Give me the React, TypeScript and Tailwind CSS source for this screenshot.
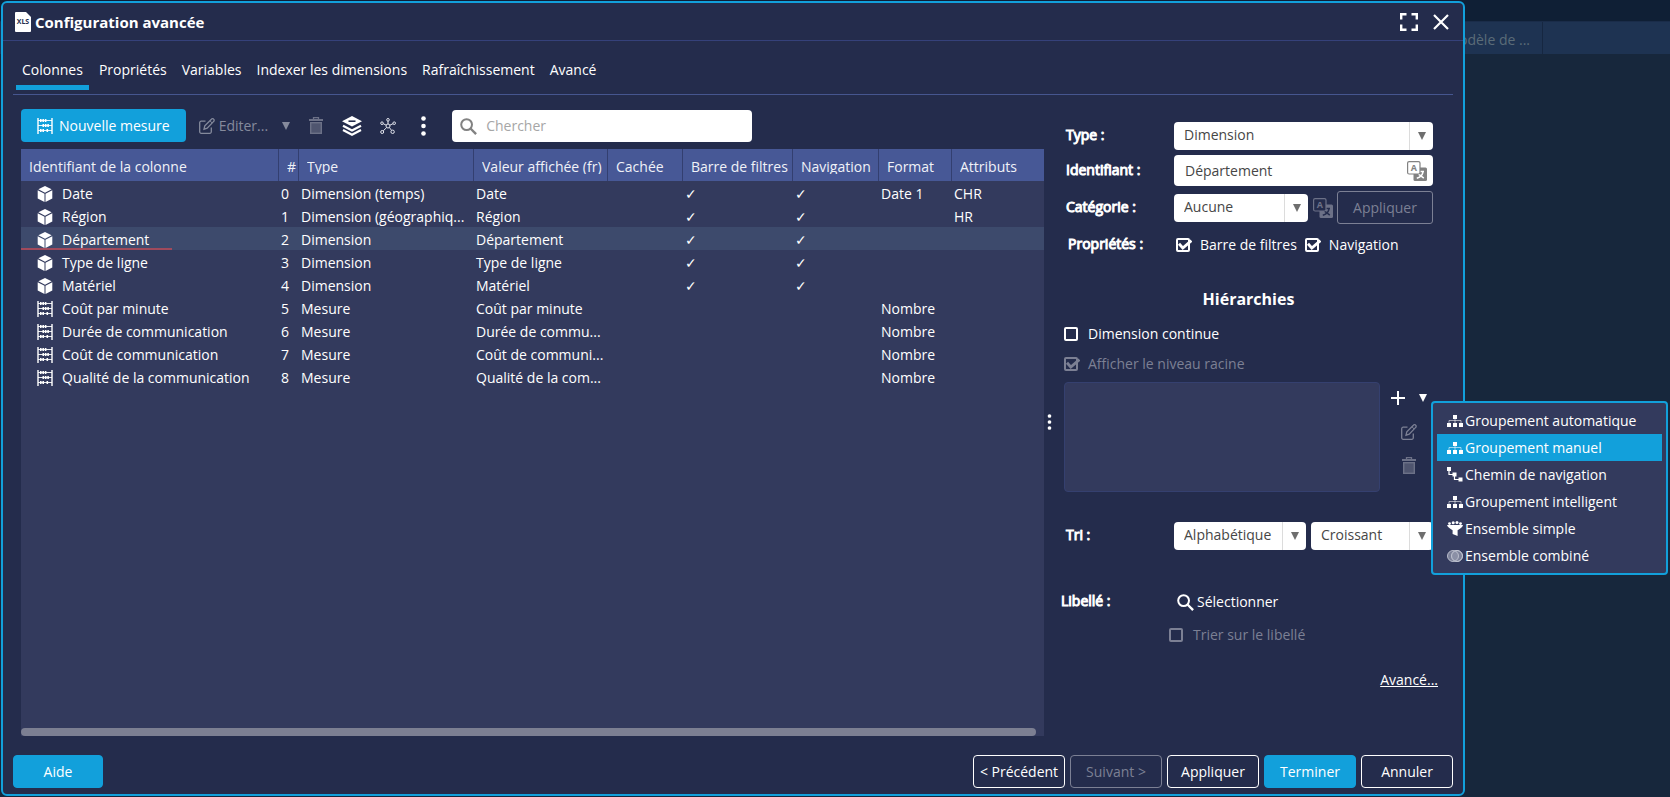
import { useState, type ReactNode } from 'react'

type Column = {
  name: string
  kind: 'dimension' | 'measure'
  type: string
  label: string
  filterBar?: boolean
  navigation?: boolean
  format?: string
  attributes?: string
}

const columns: Column[] = [
  { name: 'Date', kind: 'dimension', type: 'Dimension (temps)', label: 'Date', filterBar: true, navigation: true, format: 'Date 1', attributes: 'CHR' },
  { name: 'Région', kind: 'dimension', type: 'Dimension (géographiq...', label: 'Région', filterBar: true, navigation: true, attributes: 'HR' },
  { name: 'Département', kind: 'dimension', type: 'Dimension', label: 'Département', filterBar: true, navigation: true },
  { name: 'Type de ligne', kind: 'dimension', type: 'Dimension', label: 'Type de ligne', filterBar: true, navigation: true },
  { name: 'Matériel', kind: 'dimension', type: 'Dimension', label: 'Matériel', filterBar: true, navigation: true },
  { name: 'Coût par minute', kind: 'measure', type: 'Mesure', label: 'Coût par minute', format: 'Nombre' },
  { name: 'Durée de communication', kind: 'measure', type: 'Mesure', label: 'Durée de commu...', format: 'Nombre' },
  { name: 'Coût de communication', kind: 'measure', type: 'Mesure', label: 'Coût de communi...', format: 'Nombre' },
  { name: 'Qualité de la communication', kind: 'measure', type: 'Mesure', label: 'Qualité de la com...', format: 'Nombre' },
]

const tabs = ['Colonnes', 'Propriétés', 'Variables', 'Indexer les dimensions', 'Rafraîchissement', 'Avancé']

const headers = ['Identifiant de la colonne', '#', 'Type', 'Valeur affichée (fr)', 'Cachée', 'Barre de filtres', 'Navigation', 'Format', 'Attributs']

/* ---------- icons ---------- */

function XlsIcon() {
  return (
    <svg width="16" height="20" viewBox="0 0 16 20" aria-hidden="true">
      <path d="M1 0h10l5 5v14a1 1 0 0 1-1 1H1a1 1 0 0 1-1-1V1a1 1 0 0 1 1-1z" fill="#fff" />
      <text x="8" y="12" textAnchor="middle" fontSize="7" fontWeight="700" fontFamily="Open Sans, sans-serif" fill="#242c4c">XLS</text>
    </svg>
  )
}

function AbacusIcon() {
  return (
    <svg width="16" height="16" viewBox="0 0 16 16" fill="none" stroke="currentColor" aria-hidden="true">
      <path d="M1 0v16M15 0v16" strokeWidth="1.4" />
      <path d="M1 2.5h14M1 7.5h14M1 12.5h14" strokeWidth="0.9" />
      <path d="M3 2.5h1.6M5.4 2.5H7M7.8 2.5h1.6M5.5 7.5h1.6M7.9 7.5h1.6M10.3 7.5h1.6M3 12.5h1.6M5.4 12.5H7M9.5 12.5h1.6" strokeWidth="3" />
    </svg>
  )
}

function CubeIcon() {
  return (
    <svg width="16" height="16" viewBox="0 0 16 16" fill="currentColor" aria-hidden="true">
      <path d="M8 0l6.6 3.3L8 6.7 1.4 3.3z" />
      <path d="M.7 4.3l6.8 3.4V16L.7 12.4z" />
      <path d="M15.3 4.3L8.5 7.7V16l6.8-3.6z" />
    </svg>
  )
}

function EditIcon() {
  return (
    <svg width="16" height="16" viewBox="0 0 16 16" fill="none" stroke="currentColor" strokeWidth="1.3" aria-hidden="true">
      <path d="M6.5 3.2H2.2A1.5 1.5 0 0 0 .7 4.7v9.1a1.5 1.5 0 0 0 1.5 1.5h8.6a1.5 1.5 0 0 0 1.5-1.5V9.6" />
      <path d="M5 11.2l.8-3.4 6.6-6.6a1.5 1.5 0 0 1 2.3 0 1.5 1.5 0 0 1 0 2.2L8.2 10.2z" />
      <path d="M11 2.8l2.2 2.2" strokeWidth="1" />
    </svg>
  )
}

function TrashIcon() {
  return (
    <svg width="14" height="17" viewBox="0 0 14 17" fill="none" stroke="currentColor" aria-hidden="true">
      <path d="M0 3h14" strokeWidth="2" />
      <path d="M4.5 2V.7h5V2" strokeWidth="1.3" />
      <rect x="1.7" y="5.7" width="10.6" height="10.6" fill="currentColor" fillOpacity="0.6" strokeWidth="1.4" />
    </svg>
  )
}

function LayersIcon() {
  return (
    <svg width="20" height="20" viewBox="0 0 20 20" aria-hidden="true">
      <path d="M10 0l10 5.2-10 5.2L0 5.2z" fill="#fff" />
      <path d="M6.5 5.2h7" stroke="#242c4c" strokeWidth="1.6" />
      <path d="M1 9.8l9 4.7 9-4.7M1 14l9 4.7 9-4.7" fill="none" stroke="#fff" strokeWidth="2.2" />
    </svg>
  )
}

function NetworkIcon() {
  return (
    <svg width="16" height="16" viewBox="0 0 16 16" fill="none" stroke="#e4e6ee" strokeWidth="1" aria-hidden="true">
      <circle cx="8" cy="8" r="2" />
      <circle cx="8" cy="1.8" r="1.3" />
      <circle cx="2" cy="5.2" r="1.3" />
      <circle cx="14.2" cy="5.2" r="1.3" />
      <circle cx="2.2" cy="14" r="1.5" />
      <circle cx="12.6" cy="13.8" r="1.7" />
      <path d="M8 6V3M6.2 7.2l-3-1.5M9.8 7.2l3.2-1.5M6.6 9.6l-3.4 3.3M9.4 9.6l2.2 2.8" />
    </svg>
  )
}

function SearchIcon() {
  return (
    <svg width="17" height="17" viewBox="0 0 17 17" fill="none" stroke="currentColor" aria-hidden="true">
      <circle cx="6.6" cy="6.6" r="5.4" strokeWidth="2" />
      <path d="M10.5 10.5l5.6 5.6" strokeWidth="2.4" />
    </svg>
  )
}

function DotsIcon({ className }: { className: string }) {
  return (
    <svg className={className} viewBox="0 0 5 20" fill="#fff" aria-hidden="true">
      <circle cx="2.5" cy="2.5" r="2.3" />
      <circle cx="2.5" cy="10" r="2.3" />
      <circle cx="2.5" cy="17.5" r="2.3" />
    </svg>
  )
}

function CaretIcon() {
  return (
    <svg width="8" height="8" viewBox="0 0 8 8" fill="currentColor" aria-hidden="true">
      <path d="M0 0h8L4 8z" />
    </svg>
  )
}

function TranslateIcon() {
  return (
    <svg width="20" height="20" viewBox="0 0 20 20" aria-hidden="true">
      <rect x="6.5" y="6.5" width="13.5" height="13.5" rx="1.5" fill="currentColor" />
      <path d="M10 10.5h7M16 11.2c-.8 3-3.4 5.2-6.2 6M11.5 13.2l5.3 4" fill="none" strokeWidth="1.5" className="stroke-(--paper)" />
      <rect x="0.6" y="0.6" width="12.4" height="12.4" rx="1.5" stroke="currentColor" strokeWidth="1.2" className="fill-(--paper)" />
      <text x="6.8" y="10" textAnchor="middle" fontSize="9" fontWeight="700" fontFamily="Open Sans, sans-serif" fill="currentColor">A</text>
    </svg>
  )
}

function TreeIcon() {
  return (
    <svg width="16" height="12" viewBox="0 0 16 12" fill="#fff" aria-hidden="true">
      <rect x="6" y="0" width="4" height="4" />
      <path d="M2 8V5.5h12V8M8 4v4" fill="none" stroke="#fff" strokeOpacity="0.7" strokeWidth="0.8" />
      <rect x="0" y="8" width="4" height="4" />
      <rect x="6" y="8" width="4" height="4" />
      <rect x="12" y="8" width="4" height="4" />
    </svg>
  )
}

function PathIcon() {
  return (
    <svg width="16" height="15" viewBox="0 0 16 15" fill="#fff" aria-hidden="true">
      <rect x="0" y="0" width="4" height="4" />
      <rect x="5.5" y="5.5" width="4" height="4" />
      <rect x="11.5" y="10.5" width="4" height="4" />
      <path d="M2 4v3.500H6M7.500 9v3.500H12" fill="none" stroke="#fff" strokeWidth="1.2" />
    </svg>
  )
}

function FunnelIcon() {
  return (
    <svg width="16" height="15" viewBox="0 0 16 15" fill="#fff" aria-hidden="true">
      <path d="M0 4h16c-.3 2-2.600 3.400-5.400 5.300V15L5.600 13V9.300C3 7.600.5 6 0 4z" />
      <circle cx="2.500" cy="2.600" r="1.400" />
      <circle cx="6.200" cy="1.700" r="1.500" />
      <circle cx="10" cy="1.600" r="1.500" />
      <circle cx="13.500" cy="2.600" r="1.400" />
    </svg>
  )
}

function VennIcon() {
  return (
    <svg width="16" height="12" viewBox="0 0 16 12" fill="#8f94a9" fillOpacity="0.8" stroke="#c2c5d2" strokeWidth="0.9" aria-hidden="true">
      <circle cx="10" cy="6" r="5.5" />
      <circle cx="6" cy="6" r="5.5" />
      <circle cx="10" cy="6" r="5.500" fill="none" />
    </svg>
  )
}

/* ---------- controls ---------- */

function Select({ id, label, options, className }: { id: string; label?: string; options: string[]; className: string }) {
  return (
    <div className={`relative h-7 ${className}`}>
      <select
        id={id}
        aria-label={label}
        className="block h-7 w-full appearance-none rounded bg-white pb-[2px] pl-[10px] pr-7 text-[#464646] outline-none"
      >
        {options.map((o) => (
          <option key={o}>{o}</option>
        ))}
      </select>
      <span className="pointer-events-none absolute inset-y-0 right-0 flex w-6 items-center justify-center border-l border-[#dcdcdc] text-[#6e6e6e]">
        <CaretIcon />
      </span>
    </div>
  )
}

function Checkbox({ children, defaultChecked, disabled }: { children: ReactNode; defaultChecked?: boolean; disabled?: boolean }) {
  return (
    <label className={disabled ? 'flex h-5 items-center gap-2 text-[#7c8094]' : 'flex h-5 items-center gap-2 text-white'}>
      <span className="grid h-4 w-4 items-center">
        <input
          type="checkbox"
          defaultChecked={defaultChecked}
          disabled={disabled}
          className="peer col-start-1 row-start-1 h-[14px] w-[14px] appearance-none rounded-[2px] border-2 border-current"
        />
        <svg className="pointer-events-none invisible col-start-1 row-start-1 peer-checked:visible" width="16" height="14" viewBox="0 0 16 14" fill="none" stroke="currentColor" strokeWidth="2.8" aria-hidden="true">
          <path d="M3 5.800l3.800 4.200 8.600-7.400" />
        </svg>
      </span>
      {children}
    </label>
  )
}

function FooterButton({ children, variant = 'outline', disabled }: { children: ReactNode; variant?: 'outline' | 'solid'; disabled?: boolean }) {
  const look =
    variant === 'solid'
      ? 'border-[#12a0db] bg-[#12a0db] text-white'
      : disabled
        ? 'border-[#7c8094] text-[#7c8094]'
        : 'border-white text-white'
  return (
    <button type="button" disabled={disabled} className={`h-[33px] min-w-[90px] flex-1 whitespace-nowrap rounded border px-1 ${look}`}>
      {children}
    </button>
  )
}

const groupMenu = [
  { label: 'Groupement automatique', icon: <TreeIcon /> },
  { label: 'Groupement manuel', icon: <TreeIcon />, active: true },
  { label: 'Chemin de navigation', icon: <PathIcon /> },
  { label: 'Groupement intelligent', icon: <TreeIcon /> },
  { label: 'Ensemble simple', icon: <FunnelIcon /> },
  { label: 'Ensemble combiné', icon: <VennIcon /> },
]

function GroupMenu() {
  return (
    <div role="menu" className="absolute left-[51px] top-[19px] z-10 w-[237px] rounded border-2 border-[#12a0db] bg-[#333a5d] p-1">
      {groupMenu.map((item) => (
        <button
          key={item.label}
          type="button"
          role="menuitem"
          className={
            item.active
              ? 'flex h-[27px] w-full items-center gap-[2px] whitespace-nowrap bg-[#12a0db] pl-[10px] text-white'
              : 'flex h-[27px] w-full items-center gap-[2px] whitespace-nowrap pl-[10px] text-white'
          }
        >
          {item.icon}
          {item.label}
        </button>
      ))}
    </div>
  )
}

/* ---------- panels ---------- */

function Toolbar() {
  return (
    <div className="flex h-[33px] items-center">
      <button type="button" className="flex h-[33px] items-center gap-[6px] rounded bg-[#12a0db] px-4 text-white">
        <AbacusIcon />
        Nouvelle mesure
      </button>
      <button type="button" disabled className="ml-[13px] flex items-center gap-1 text-[#858a9c]">
        <EditIcon />
        Editer...
        <span className="ml-[10px]">
          <CaretIcon />
        </span>
      </button>
      <button type="button" disabled aria-label="Supprimer" className="ml-[19px] text-[#6c7187]">
        <TrashIcon />
      </button>
      <button type="button" aria-label="Niveaux" className="ml-[19px]">
        <LayersIcon />
      </button>
      <button type="button" aria-label="Relations" className="ml-[18px]">
        <NetworkIcon />
      </button>
      <button type="button" aria-label="Plus" className="ml-[25px]">
        <DotsIcon className="h-5 w-[5px]" />
      </button>
      <label className="ml-[26px] mt-px flex h-8 w-[300px] items-center gap-[9px] rounded bg-white pl-2 text-[#828282]">
        <SearchIcon />
        <input type="text" placeholder="Chercher" aria-label="Chercher" className="min-w-0 flex-1 bg-transparent text-[#464646] outline-none placeholder:text-[#a6a6a6]" />
      </label>
    </div>
  )
}

function ColumnsTable() {
  const [selected, setSelected] = useState(2)

  return (
    <div className="mt-[7px] flex flex-1 flex-col bg-[#333a5d]">
      <table className="w-full table-fixed border-separate border-spacing-0 whitespace-nowrap text-left">
        <colgroup>
          <col className="w-[258px]" />
          <col className="w-[20px]" />
          <col className="w-[175px]" />
          <col className="w-[134px]" />
          <col className="w-[75px]" />
          <col className="w-[110px]" />
          <col className="w-[86px]" />
          <col className="w-[73px]" />
          <col />
        </colgroup>
        <thead>
          <tr className="h-8 bg-[#475896]">
            {headers.map((h) => (
              <th key={h} className="border-r border-[#333f70] p-0 pl-2 pt-1 font-normal text-[#f0f2f8] last:border-r-0">
                <span className="block h-[14px] overflow-hidden leading-[14px]">{h}</span>
              </th>
            ))}
          </tr>
        </thead>
        <tbody>
          {columns.map((c, i) => (
            <tr key={c.name} onClick={() => setSelected(i)} className={i === selected ? 'h-[23px] bg-[#3d4a6c]' : 'h-[23px]'}>
              <td className="relative p-0 pl-4 pt-[2px]">
                <span className="flex items-center gap-[9px]">
                  {c.kind === 'dimension' ? <CubeIcon /> : <AbacusIcon />}
                  {c.name}
                </span>
                {i === selected && <span className="absolute bottom-0 left-0 h-[2px] w-[151px] bg-[#a04a5c]" />}
              </td>
              <td className="p-0 pl-[2px] pt-[2px]">{i}</td>
              <td className="p-0 pl-[2px] pt-[2px]">{c.type}</td>
              <td className="p-0 pl-[2px] pt-[2px]">{c.label}</td>
              <td className="p-0" />
              <td className="p-0 pl-[2px] pt-[2px]">{c.filterBar && '✓'}</td>
              <td className="p-0 pl-[2px] pt-[2px]">{c.navigation && '✓'}</td>
              <td className="p-0 pl-[2px] pt-[2px]">{c.format}</td>
              <td className="p-0 pl-[2px] pt-[2px]">{c.attributes}</td>
            </tr>
          ))}
        </tbody>
      </table>
      <div className="mr-2 mt-auto h-2 rounded-full bg-[#7c7f92]" />
    </div>
  )
}

const labelClass = 'w-[110px] shrink-0 pb-[2px] pl-[2px] [-webkit-text-stroke:1px_white]'

function DetailsPanel() {
  return (
    <div className="flex w-[419px] shrink-0">
      <div className="flex w-5 shrink-0 items-center pl-[3px] pt-3">
        <DotsIcon className="h-4 w-[5px]" />
      </div>
      <form className="min-w-0 flex-1 pr-[30px] pt-[27px]">
        <div className="flex items-center">
          <label htmlFor="type" className={labelClass}>Type :</label>
          <Select id="type" options={['Dimension', 'Mesure']} className="flex-1" />
        </div>
        <div className="mt-[5px] flex items-center">
          <label htmlFor="identifier" className={labelClass}>Identifiant :</label>
          <div className="flex h-[31px] min-w-0 flex-1 items-center rounded bg-white pl-[11px] pr-[6px] text-[#828282] [--paper:#ffffff]">
            <input id="identifier" type="text" defaultValue="Département" className="min-w-0 flex-1 text-[#464646] outline-none" />
            <TranslateIcon />
          </div>
        </div>
        <div className="mt-[5px] flex items-center">
          <label htmlFor="category" className={labelClass}>Catégorie :</label>
          <Select id="category" options={['Aucune']} className="flex-1" />
          <span className="ml-[5px] text-[#6c7187] [--paper:#242c4c]">
            <TranslateIcon />
          </span>
          <button type="button" disabled className="ml-1 h-[33px] w-24 rounded-[3px] border border-[#7c8094] text-[#7c8094]">
            Appliquer
          </button>
        </div>
        <div className="mt-[11px] flex h-5 items-center pl-[2px]">
          <span className={labelClass}>Propriétés :</span>
          <div className="flex gap-2 whitespace-nowrap">
            <Checkbox defaultChecked>Barre de filtres</Checkbox>
            <Checkbox defaultChecked>Navigation</Checkbox>
          </div>
        </div>

        <h2 className="mt-[34px] text-center text-base/5 font-bold">Hiérarchies</h2>
        <div className="mt-[15px]">
          <Checkbox>Dimension continue</Checkbox>
        </div>
        <div className="mt-[10px]">
          <Checkbox defaultChecked disabled>Afficher le niveau racine</Checkbox>
        </div>
        <div className="mt-2 flex">
          <div className="h-[110px] min-w-0 flex-1 rounded border border-[#35406f] bg-[#333a5d]" />
          <div className="relative w-[53px] shrink-0">
            <div className="flex h-8 items-center pl-[11px]">
              <button type="button" aria-label="Ajouter">
                <svg width="14" height="14" viewBox="0 0 14 14" stroke="#fff" strokeWidth="2" aria-hidden="true">
                  <path d="M7 0v14M0 7h14" />
                </svg>
              </button>
              <button type="button" aria-label="Types de groupement" className="ml-[14px]">
                <CaretIcon />
              </button>
            </div>
            <button type="button" disabled aria-label="Modifier" className="ml-[21px] mt-[10px] block text-[#7c8094]">
              <EditIcon />
            </button>
            <button type="button" disabled aria-label="Supprimer" className="ml-[22px] mt-[17px] block text-[#6c7187]">
              <TrashIcon />
            </button>
            <GroupMenu />
          </div>
        </div>

        <div className="mt-[30px] flex items-center">
          <label htmlFor="sort" className={labelClass}>Tri :</label>
          <div className="flex flex-1 gap-[5px]">
            <Select id="sort" options={['Alphabétique']} className="w-[132px]" />
            <Select id="order" label="Ordre" options={['Croissant', 'Décroissant']} className="flex-1" />
          </div>
        </div>
        <div className="-ml-[5px] mt-[42px] flex h-5 items-center">
          <span className={labelClass}>Libellé :</span>
          <button type="button" className="flex items-center gap-[3px] pl-2">
            <SearchIcon />
            Sélectionner
          </button>
        </div>
        <div className="mt-[13px] pl-[105px]">
          <Checkbox disabled>Trier sur le libellé</Checkbox>
        </div>
        <div className="-mr-[5px] mt-[25px] text-right leading-5">
          <a href="#" className="underline">Avancé...</a>
        </div>
      </form>
    </div>
  )
}

export default function App() {
  const [tab, setTab] = useState('Colonnes')

  return (
    <div className="relative flex min-h-screen overflow-hidden bg-[#17273c] py-px pl-px pr-[205px] font-['Open_Sans',sans-serif] text-sm text-white">
      {/* page behind the dialog */}
      <div className="absolute inset-x-0 top-0 bg-[#0f1f35] pt-[21px]">
        <div className="flex h-[33px] justify-end border-t border-[#1a2c49] bg-[#1e3352] pr-[127px]">
          <span className="flex items-center border-r border-[#162741] pr-3 pt-1 text-[#5b6c78]">Modèle de ...</span>
        </div>
      </div>

      <div role="dialog" aria-label="Configuration avancée" className="relative flex min-w-0 flex-1 flex-col rounded-md border-2 border-[#12a0db] bg-[#242c4c]">
        <header className="flex h-[38px] items-center gap-1 border-b border-[#35417a] pl-3 pr-[14px]">
          <XlsIcon />
          <h1 className="flex-1 pt-[2px] text-[15px] font-bold">Configuration avancée</h1>
          <button type="button" aria-label="Plein écran">
            <svg width="18" height="18" viewBox="0 0 18 18" fill="none" stroke="#fff" strokeWidth="2.400" aria-hidden="true">
              <path d="M1.200 6.500V1.200h5.300M11.500 1.200h5.300v5.300M16.800 11.500v5.300h-5.300M6.500 16.800H1.200v-5.300" />
            </svg>
          </button>
          <button type="button" aria-label="Fermer" className="ml-[11px]">
            <svg width="16" height="16" viewBox="0 0 16 16" stroke="#fff" strokeWidth="2.200" aria-hidden="true">
              <path d="M1 1l14 14M15 1L1 15" />
            </svg>
          </button>
        </header>

        <nav className="mx-[10px] flex h-[54px] items-end border-b border-[#46568f] pb-1 pl-[3px]">
          {tabs.map((t) => (
            <button
              key={t}
              type="button"
              onClick={() => setTab(t)}
              className={
                t === tab
                  ? 'mr-1 border-b-[5px] border-[#12a0db] px-[6px] pb-[5px] leading-5'
                  : 'mr-[3px] border-b-[5px] border-transparent px-[6px] pb-[5px] leading-5'
              }
            >
              {t}
            </button>
          ))}
        </nav>

        <main className="flex flex-1 pl-[18px]">
          <section className="flex min-w-0 flex-1 flex-col pt-[14px]">
            <Toolbar />
            <ColumnsTable />
          </section>
          <DetailsPanel />
        </main>

        <footer className="flex justify-between px-[10px] pb-[6px] pt-[19px]">
          <div className="flex">
            <FooterButton variant="solid">Aide</FooterButton>
          </div>
          <div className="flex w-[480px] gap-[5px]">
            <FooterButton>&lt; Précédent</FooterButton>
            <FooterButton disabled>Suivant &gt;</FooterButton>
            <FooterButton>Appliquer</FooterButton>
            <FooterButton variant="solid">Terminer</FooterButton>
            <FooterButton>Annuler</FooterButton>
          </div>
        </footer>
      </div>
    </div>
  )
}
